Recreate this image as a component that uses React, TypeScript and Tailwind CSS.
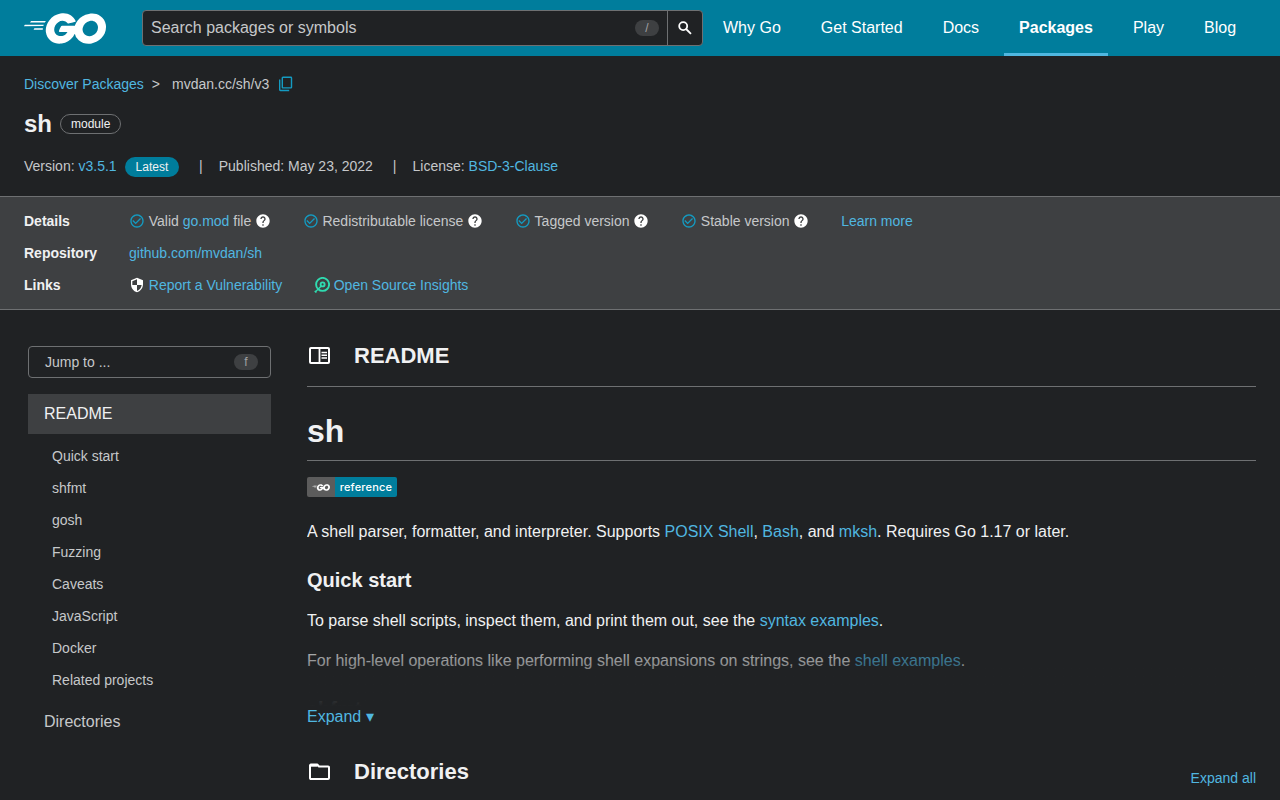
import React from "react";
import { MdHelp, MdCheckCircleOutline, MdSecurity } from "react-icons/md";
import { SiGo } from "react-icons/si";

const nav = ["Why Go", "Get Started", "Docs", "Packages", "Play", "Blog"];
const sections = ["Quick start", "shfmt", "gosh", "Fuzzing", "Caveats", "JavaScript", "Docker", "Related projects"];

function Link({ children }: { children: React.ReactNode }) {
  return <a href="#" className="text-[#50b7e0]">{children}</a>;
}

function Key({ children }: { children: React.ReactNode }) {
  return (
    <kbd className="flex h-4 w-6 items-center justify-center rounded-full bg-[#3e4042] font-['Liberation_Sans',sans-serif] text-xs text-[#a0a2a4]">
      {children}
    </kbd>
  );
}

function Check({ children }: { children: React.ReactNode }) {
  return (
    <li className="flex items-center">
      <MdCheckCircleOutline className="mr-[3.7px] size-4 text-[#149bc2]" />
      <span>{children}</span>
      <MdHelp className="ml-[3.6px] size-4 text-white" />
    </li>
  );
}

function SearchIcon() {
  return (
    <svg viewBox="0 0 18 18" className="size-[18px]" fill="none" stroke="#fff" strokeWidth="1.8">
      <circle cx="7.2" cy="7.1" r="4" />
      <path d="M10.1 10 15 14.9" />
    </svg>
  );
}

function InsightsLogo() {
  return (
    <svg viewBox="0 0 16 16" className="mr-[3.6px] size-4" fill="none" stroke="#2fdbb0">
      <circle cx="8.6" cy="7.4" r="6.5" strokeWidth="1.9" />
      <circle cx="8.6" cy="7.4" r="2" strokeWidth="1.9" />
      <path d="M7 9.2 1 15.2M0.7 13.9l1.7 1.7" strokeWidth="1.4" />
    </svg>
  );
}

function CopyIcon() {
  return (
    <svg viewBox="0 0 16 16" className="ml-[9px] size-4 text-[#149bc2]" fill="none" stroke="currentColor" strokeWidth="1.4">
      <rect x="4.3" y="1.3" width="9.2" height="10.6" rx="0.6" />
      <path d="M1.7 3.6v10.2a.7.7 0 0 0 .7.7h8.8" />
    </svg>
  );
}

function ReaderIcon() {
  return (
    <svg viewBox="0 0 24 24" className="mr-[23px] size-6" fill="none" stroke="#fff" strokeWidth="2">
      <rect x="3" y="4" width="19" height="15" rx="1" />
      <path d="M12.5 4v15" strokeWidth="1.8" />
      <path d="M14.5 8.5h5.5M14.5 11.3h5.5M14.5 14h5.5" strokeWidth="1.6" />
    </svg>
  );
}

function FolderIcon() {
  return (
    <svg viewBox="0 0 24 24" className="mr-[23px] size-6" fill="none" stroke="#fff" strokeWidth="2" strokeLinejoin="round">
      <path d="M3 5.5v12.6a.9.9 0 0 0 .9.9h17.2a.9.9 0 0 0 .9-.9V7.4a.9.9 0 0 0-.9-.9H12l-1.8-2H3.9a.9.9 0 0 0-.9 1z" />
      <path d="M3.5 5.7h7" />
    </svg>
  );
}

export default function App() {
  return (
    <div className="h-[800px] overflow-hidden bg-[#202224] font-['Liberation_Sans',sans-serif] text-sm leading-5 text-[#c6c8ca]">
      <header className="flex h-14 items-center bg-[#007d9c] pl-6 text-base">
        <SiGo viewBox="0 7.5 24 9" className="mr-9 h-[31px] w-[82px] text-white" />
        <form className="flex h-9 w-[561px] items-center rounded border border-[#6e7072] bg-[#202224]">
          <span className="flex-1 pl-2">Search packages or symbols</span>
          <Key>/</Key>
          <span className="ml-2 flex h-full w-[35px] items-center justify-center border-l border-[#6e7072]">
            <SearchIcon />
          </span>
        </form>
        <nav className="ml-[5px] flex h-full gap-[10px] text-white">
          {nav.map((n) => (
            <a
              key={n}
              href="#"
              className={
                n === "Packages"
                  ? "flex items-center border-b-3 border-[#50b7e0] px-[15px] pt-[3px] font-bold"
                  : "flex items-center px-[15px]"
              }
            >
              {n}
            </a>
          ))}
        </nav>
      </header>

      <section className="flex h-[140px] flex-col px-6 pt-[18px]">
        <div className="flex h-5 items-center">
          <Link>Discover Packages</Link>
          <span className="ml-2">&gt;</span>
          <span className="ml-3">mvdan.cc/sh/v3</span>
          <CopyIcon />
        </div>
        <div className="mt-[14px] flex h-8 items-center gap-2">
          <h1 className="text-2xl font-bold text-[#f0f1f2]">sh</h1>
          <span className="h-5 rounded-full border border-[#6e7072] px-[10px] text-xs leading-[18px] text-[#f0f1f2]">module</span>
        </div>
        <div className="mt-4 flex h-5 items-center">
          <span>Version: <Link>v3.5.1</Link></span>
          <span className="mt-px ml-[8.2px] h-5 rounded-full bg-[#007d9c] px-[10.8px] text-xs leading-5 text-[#f0f1f2]">Latest</span>
          <span className="ml-5">|</span>
          <span className="ml-4">Published: May 23, 2022</span>
          <span className="ml-5">|</span>
          <span className="ml-4">License: <Link>BSD-3-Clause</Link></span>
        </div>
      </section>

      <section className="grid h-[114px] grid-cols-[105px_1fr] content-start gap-y-3 border-y border-[#6e7072] bg-[#3e4042] px-6 pt-[14px]">
        <b className="text-[#f0f1f2]">Details</b>
        <ul className="flex h-5 items-center gap-8">
          <Check>Valid <Link>go.mod</Link> file</Check>
          <Check>Redistributable license</Check>
          <Check>Tagged version</Check>
          <Check>Stable version</Check>
          <li><Link>Learn more</Link></li>
        </ul>
        <b className="text-[#f0f1f2]">Repository</b>
        <span><Link>github.com/mvdan/sh</Link></span>
        <b className="text-[#f0f1f2]">Links</b>
        <ul className="flex h-5 items-center gap-8">
          <li className="flex items-center"><MdSecurity className="mr-[3.8px] size-4 text-white" /><Link>Report a Vulnerability</Link></li>
          <li className="flex items-center"><InsightsLogo /><Link>Open Source Insights</Link></li>
        </ul>
      </section>

      <div className="flex">
        <aside className="ml-7 w-[243px] pt-9">
          <div className="flex h-8 items-center justify-between rounded border border-[#6e7072] pr-3 pl-4">
            <span>Jump to ...</span>
            <Key>f</Key>
          </div>
          <div className="mt-4 flex h-10 items-center bg-[#3e4042] pl-4 text-base text-[#f0f1f2]">README</div>
          <ul className="mt-[6px]">
            {sections.map((s) => (
              <li key={s} className="flex h-8 items-center pl-6">{s}</li>
            ))}
          </ul>
          <div className="mt-[6px] flex h-10 items-center pl-4 text-base">Directories</div>
        </aside>

        <main className="ml-9 w-[949px] text-base leading-6 text-[#f0f1f2]">
          <h2 className="flex h-[77px] items-center border-b border-[#6e7072] pt-4 text-[22px] font-bold">
            <ReaderIcon />
            README
          </h2>
          <article className="relative h-[319px] overflow-hidden">
            <h3 className="mt-6 h-[50px] border-b border-[#6e7072] text-[32px] leading-10 font-bold">sh</h3>
            <div className="mt-4 flex h-5 w-[90px] overflow-hidden rounded-xs">
              <span className="flex w-7 items-center justify-center bg-[#5c5c5c]">
                <SiGo viewBox="0 7.5 24 9" className="h-[7px] w-[18px] text-white" />
              </span>
              <span className="flex-1 bg-[#007d9c] text-center font-['Inter',sans-serif] text-[11px] leading-5 font-medium tracking-[0.2px] text-white">reference</span>
            </div>
            <p className="mt-[23px]">
              A shell parser, formatter, and interpreter. Supports <Link>POSIX Shell</Link>, <Link>Bash</Link>, and <Link>mksh</Link>. Requires Go 1.17 or later.
            </p>
            <h4 className="mt-6 text-xl leading-6 font-bold">Quick start</h4>
            <p className="mt-[17px]">To parse shell scripts, inspect them, and print them out, see the <Link>syntax examples</Link>.</p>
            <p className="mt-4">For high-level operations like performing shell expansions on strings, see the <Link>shell examples</Link>.</p>
            <h4 className="mt-6 text-xl leading-6 font-bold">shfmt</h4>
            <div className="absolute inset-x-0 bottom-0 h-20 bg-linear-to-t from-[#202224] to-transparent" />
          </article>
          <div className="-mt-px h-6"><Link>Expand ▾</Link></div>
          <div className="mt-[23px] flex h-10 items-center justify-between">
            <h2 className="flex items-center text-[22px] font-bold">
              <FolderIcon />
              Directories
            </h2>
            <span className="mt-3 text-sm"><Link>Expand all</Link></span>
          </div>
        </main>
      </div>
    </div>
  );
}
